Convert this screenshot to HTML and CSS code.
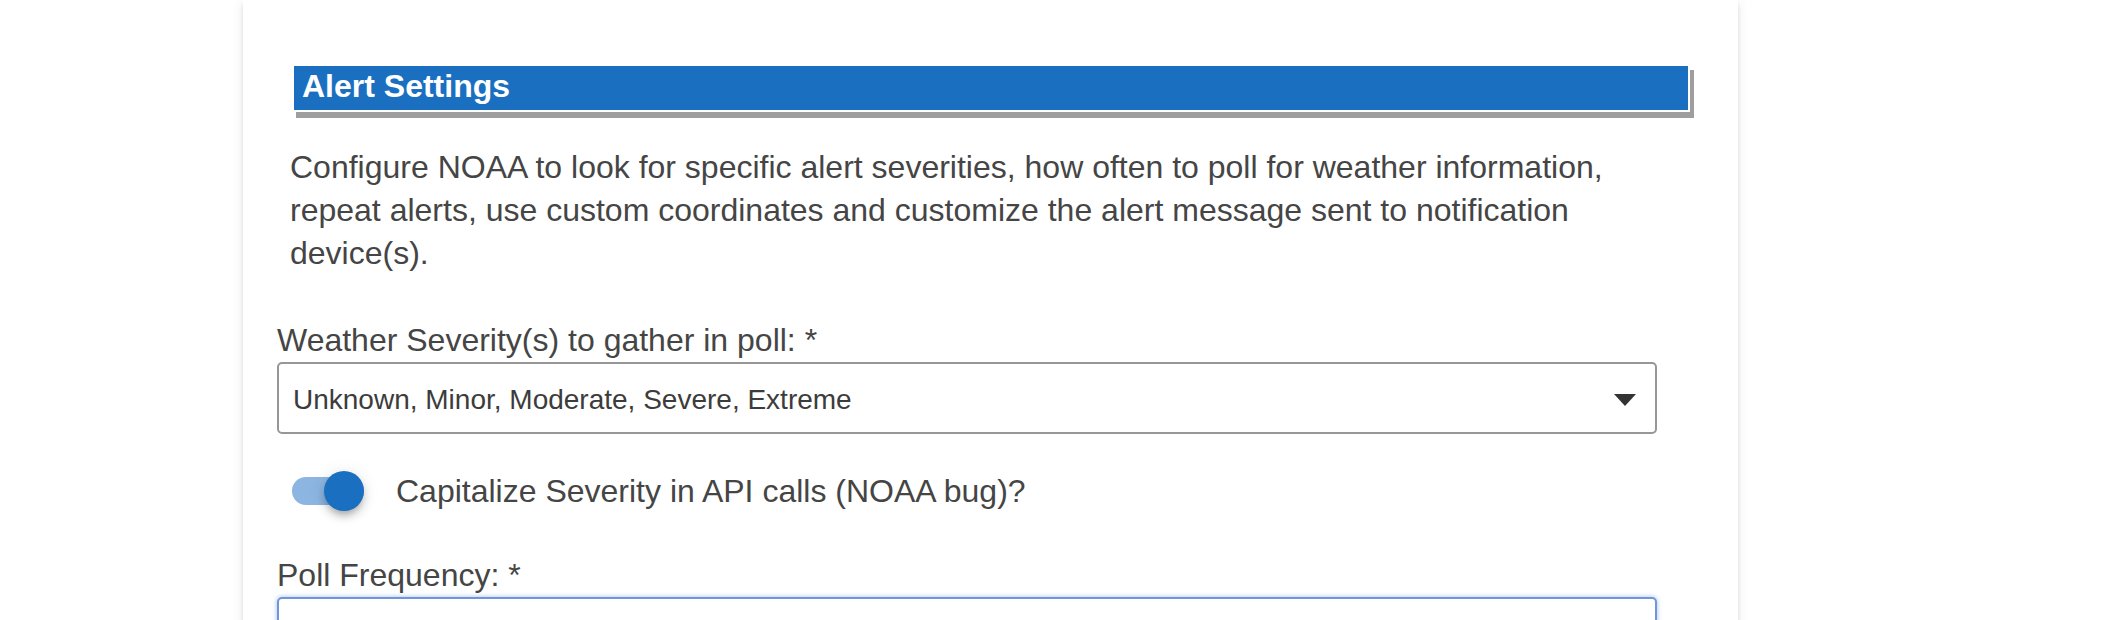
FILE: index.html
```html
<!DOCTYPE html>
<html lang="en">
<head>
<meta charset="utf-8">
<title>Alert Settings</title>
<link rel="stylesheet" href="styles.css">
</head>
<body>
<div class="page">
  <div class="card">
    <div class="section">
      <div class="section-title">Alert Settings</div>
      <p class="section-desc">Configure NOAA to look for specific alert severities, how often to poll for weather information, repeat alerts, use custom coordinates and customize the alert message sent to notification device(s).</p>
    </div>
    <div class="field field-first">
      <label class="field-label">Weather Severity(s) to gather in poll: *</label>
      <div class="select">
        <span class="select-value">Unknown, Minor, Moderate, Severe, Extreme</span>
        <svg class="select-arrow" width="22" height="12" viewBox="0 0 22 12"><polygon points="0,0 22,0 11,12" fill="#333"/></svg>
      </div>
    </div>
    <div class="switch-row">
      <span class="switch"><span class="switch-track"></span><span class="switch-thumb"></span></span>
      <span class="switch-label">Capitalize Severity in API calls (NOAA bug)?</span>
    </div>
    <div class="field field-second">
      <label class="field-label">Poll Frequency: *</label>
      <div class="input"></div>
    </div>
  </div>
</div>
</body>
</html>
```

FILE: styles.css
```css
html, body {
  margin: 0;
  padding: 0;
  background: #ffffff;
}

body {
  font-family: "Liberation Sans", Arial, Helvetica, sans-serif;
  color: #444444;
  overflow: hidden;
}

.page {
  padding-left: 243px;
}

.card {
  width: 1495px;
  box-sizing: border-box;
  background: #ffffff;
  padding: 64px 48px 60px 34px;
  box-shadow: 0 4px 4px rgba(0, 0, 0, 0.10), 0 2px 12px rgba(0, 0, 0, 0.08);
}

.section-title {
  margin-left: 15px;
  background: #1b6fc1;
  border: 2px solid #ffffff;
  box-shadow: 4px 6px 0 #9e9e9e;
  color: #ffffff;
  font-weight: bold;
  font-size: 32px;
  line-height: 40px;
  padding: 0 0 4px 8px;
}

.section-desc {
  margin: 34px 0 0 13px;
  font-size: 32px;
  line-height: 43px;
  color: #454545;
}

.field-first {
  margin-top: 44px;
}

.field-second {
  margin-top: 39px;
}

.field {
  padding-right: 33px;
}

.field-label {
  display: block;
  font-size: 32px;
  line-height: 43px;
  color: #454545;
  margin-bottom: 0;
}

.select {
  height: 72px;
  box-sizing: border-box;
  border: 2px solid #979797;
  border-radius: 5px;
  display: flex;
  align-items: center;
  justify-content: space-between;
  padding: 0 19px 0 14px;
  background: #ffffff;
}

.select-value {
  font-size: 28px;
  color: #3c3c3c;
  margin-top: 4px;
}

.select-arrow {
  display: block;
  margin-top: 4px;
}

.switch-row {
  margin-top: 33px;
  margin-left: 15px;
  height: 48px;
  display: flex;
  align-items: center;
}

.switch {
  position: relative;
  width: 104px;
  height: 48px;
  flex: none;
}

.switch-track {
  position: absolute;
  left: 0;
  top: 10px;
  width: 72px;
  height: 28px;
  border-radius: 14px;
  background: #8cb6e1;
}

.switch-thumb {
  position: absolute;
  left: 32px;
  top: 4px;
  width: 40px;
  height: 40px;
  border-radius: 50%;
  background: #1b6fc1;
  box-shadow: 0 6px 8px rgba(0, 0, 0, 0.14), 0 6px 6px -4px rgba(0, 0, 0, 0.2), 0 2px 16px rgba(0, 0, 0, 0.12);
}

.switch-label {
  font-size: 32px;
  line-height: 48px;
  color: #454545;
}

.input {
  height: 70px;
  box-sizing: border-box;
  border: 2px solid #7096d8;
  border-radius: 5px;
  box-shadow: 0 0 5px rgba(80, 130, 215, 0.55);
  background: #ffffff;
}
```
